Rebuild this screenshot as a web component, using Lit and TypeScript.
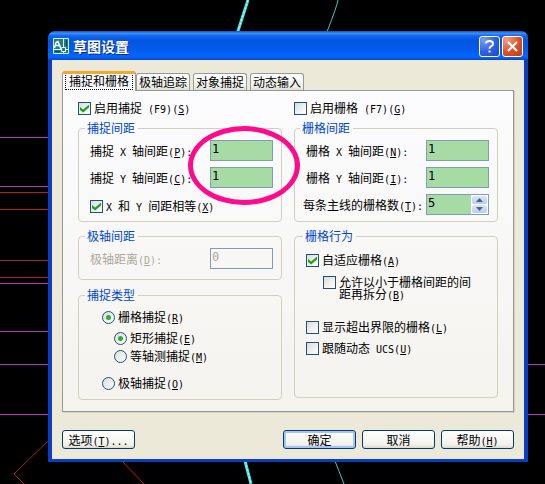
import { LitElement, html, css, svg } from "lit";
import { customElement } from "lit/decorators.js";

const en = (text: string) => html`<span class="en">${text}</span>`;
const key = (k: string, tail = "") => html`<span class="en">(<u>${k}</u>)${tail}</span>`;

const hLines: [number, string][] = [
  [137, "#c030c4"],
  [186, "#c030c4"],
  [192, "#b82020"],
  [209, "#b82020"],
  [260, "#b82020"],
  [277, "#b82020"],
  [283, "#c030c4"],
  [331, "#c030c4"],
  [364, "#c030c4"],
  [414, "#c030c4"],
];

@customElement("app-root")
export class AppRoot extends LitElement {
  static styles = css`
    :host {
      display: block;
      position: relative;
      box-sizing: border-box;
      min-height: 100vh;
      padding: 31px 17px 22px 48px;
      background: #000;
      overflow: hidden;
      color: #000;
      font: 12px/14px "Noto Sans CJK SC", sans-serif;
    }
    * {
      box-sizing: border-box;
    }
    .drawing {
      position: absolute;
      left: 0;
      top: 0;
    }
    .en {
      font: 10px/1px "DejaVu Sans Mono", monospace;
      white-space: pre;
    }
    .dialog {
      position: relative;
      border-radius: 7px 7px 0 0;
      background: #0a3fc4;
      overflow: hidden;
    }
    .title {
      display: flex;
      align-items: center;
      height: 29px;
      padding: 0 5px;
      color: #fff;
      background: linear-gradient(#0b50c8, #3a93ff 8%, #1468ee 16%, #0456e2 30%, #0459ea 60%, #0266ff 85%, #0260f4 93%, #0340c0);
    }
    .title h1 {
      flex: 1;
      margin: 0 0 0 4px;
      font-size: 14px;
      line-height: 20px;
      font-weight: 700;
      text-shadow: 1px 1px #0a2a7c;
    }
    .cap {
      width: 21px;
      height: 21px;
      margin: 2px 0 0 2px;
      padding: 0;
      border: 1px solid #fff;
      border-radius: 3px;
      background: radial-gradient(circle at 20% 15%, #7c9cf2, #2c5fe0 55%, #1c48c4);
    }
    .cap.close {
      background: radial-gradient(circle at 20% 15%, #f0a088, #dc5028 55%, #c03c14);
    }
    .cap svg {
      display: block;
    }
    .body {
      margin: 0 4px 3px;
      padding: 11px 10px 10px;
      background: #ece9d8;
    }
    .tabs {
      display: flex;
      align-items: flex-end;
      gap: 3px;
      height: 19px;
    }
    .tab {
      height: 17px;
      padding: 0 2px;
      border: 1px solid #919b9c;
      border-bottom: 0;
      border-radius: 3px 3px 0 0;
      background: linear-gradient(#fff, #f0f0ea 80%, #dcdcd4);
      font: inherit;
      line-height: 16px;
      color: #000;
      white-space: nowrap;
    }
    .tab.active {
      position: relative;
      z-index: 1;
      height: 20px;
      margin: 0 -3px -1px 0;
      border-top: 3px solid #f0a830;
      background: #fcfcfe;
      line-height: 12px;
    }
    .tab.active span {
      display: block;
      height: 15px;
      padding: 0 3px;
      border: 1px dotted #000;
      border-top: 0;
    }
    .panel {
      display: grid;
      grid-template-columns: 1fr 1fr;
      gap: 12px;
      padding: 11px 15px 11px;
      border: 1px solid #919b9c;
      background: linear-gradient(#fcfcfe, #f4f3ee);
      box-shadow: 1px 1px #d4d0c0;
    }
    .col {
      display: flex;
      flex-direction: column;
      min-width: 0;
    }
    .check {
      display: flex;
      align-items: flex-start;
      gap: 3px;
      min-height: 13px;
      line-height: 12px;
      white-space: nowrap;
    }
    .top {
      margin-bottom: 6px;
    }
    input {
      margin: 0;
      font: inherit;
    }
    .check input {
      appearance: none;
      flex: none;
      display: grid;
      place-items: center;
      width: 13px;
      height: 13px;
      border: 1px solid #1c5180;
      background: linear-gradient(135deg, #dcdcd7, #fff);
    }
    .check input[type="checkbox"]:checked::before {
      content: "";
      width: 9px;
      height: 8px;
      background: #21a121;
      clip-path: polygon(0 30%, 35% 62%, 100% 0, 100% 38%, 35% 100%, 0 68%);
    }
    .check input[type="radio"] {
      border-radius: 50%;
    }
    .check input[type="radio"]:checked::before {
      content: "";
      width: 5px;
      height: 5px;
      border-radius: 50%;
      background: #2fae2f;
    }
    fieldset {
      position: relative;
      min-width: 0;
      margin: 0;
      border: 1px solid #d0d0bf;
      border-radius: 4px;
      padding: 5px 8px 6px;
    }
    legend {
      height: 14px;
      margin: 0;
      padding: 0 3px 0 2px;
      line-height: 14px;
      color: #0046d5;
    }
    .left legend {
      margin-left: -5px;
    }
    .left fieldset {
      padding-left: 11px;
    }
    .right legend {
      margin-left: -3px;
    }
    .row {
      display: flex;
      align-items: center;
      justify-content: space-between;
      height: 21px;
      white-space: nowrap;
    }
    .row + .row {
      margin-top: 6px;
    }
    .indent {
      padding-left: 3px;
    }
    .field {
      width: 63px;
      height: 21px;
      padding: 0 1px 3px;
      border: 1px solid #7f9db9;
      border-radius: 0;
      background: #a6dca4;
      color: #000;
      font: 12px/16px "DejaVu Sans Mono", monospace;
    }
    .off {
      color: #aca899;
    }
    .field:disabled {
      background: transparent;
      color: #aca899;
    }
    .spin {
      display: flex;
      width: 63px;
      height: 21px;
      border: 1px solid #7f9db9;
      background: #fff;
    }
    .spin .field {
      flex: 1;
      width: 0;
      height: 19px;
      border: 0;
    }
    .arrows {
      display: grid;
      gap: 1px;
      padding: 1px;
    }
    .arrows button {
      display: grid;
      place-items: center;
      width: 15px;
      height: 8px;
      padding: 0;
      border: 0;
      border-radius: 2px;
      background: linear-gradient(#dce6fc, #b8ccf4);
    }
    .equal {
      margin: 12px 0 2px;
    }
    .polar {
      margin: 7px 0 8px;
      padding-bottom: 10px;
    }
    .type {
      padding: 9px 0 9px;
    }
    .type .check {
      margin-left: 12px;
    }
    .type .sub {
      margin-left: 24px;
    }
    .gap-s {
      margin-top: 5px;
    }
    .gap-m {
      margin-top: 8px;
    }
    .gap-l {
      margin-top: 14px;
    }
    .behavior {
      flex: 1;
      margin: 7px 0 2px;
      padding: 11px 8px 10px 11px;
    }
    .behavior .sub {
      margin: 9px 0 21px 17px;
    }
    .footer {
      display: flex;
      gap: 6px;
      margin-top: 18px;
    }
    .btn {
      width: 73px;
      height: 19px;
      padding: 0;
      border: 1px solid #003c74;
      border-radius: 3px;
      background: linear-gradient(#fff, #f2f1ec 80%, #dcd8cc);
      color: #000;
      font: inherit;
      line-height: 16px;
      white-space: nowrap;
    }
    .btn.first {
      margin-right: auto;
    }
    .btn.default {
      box-shadow: inset 0 0 0 2px #a8c4f4;
    }
    .mark {
      position: absolute;
      left: 109px;
      top: -9px;
      width: 112px;
      height: 79px;
      border: 5px solid #ff0a8c;
      border-radius: 50%;
      pointer-events: none;
      z-index: 2;
    }
  `;

  private check(cls: string, on: boolean, label: unknown) {
    return html`<label class="check ${cls}"><input type="checkbox" .checked=${on} /><span>${label}</span></label>`;
  }

  private radio(cls: string, name: string, on: boolean, label: unknown) {
    return html`<label class="check ${cls}"><input type="radio" name=${name} .checked=${on} /><span>${label}</span></label>`;
  }

  private row(cls: string, label: unknown, value: string, disabled = false) {
    return html`<label class="row ${cls}"><span>${label}</span><input class="field" type="text" .value=${value} ?disabled=${disabled} /></label>`;
  }

  render() {
    return html`
      <svg class="drawing" width="545" height="484" viewBox="0 0 545 484" fill="none" aria-hidden="true">
        ${hLines.map(([y, c]) => svg`<path d="M0 ${y + 0.5}H50" stroke=${c} />`)}
        <path d="M520 364.5H545M520 414.5H545" stroke="#c030c4" />
        <path d="M50 439L14 474L24 484M122 461L144 484" stroke="#c01c10" />
        <path d="M248 0L237 34M245 461L251 484" stroke="#4fe0e0" stroke-width="3" />
        <path d="M248 0L237 34M245 461L251 484" stroke="#c8ffff" stroke-dasharray="2 2" />
        <path d="M338 0Q337 6 327 32M335 461L344 484" stroke="#40c8c8" />
      </svg>
      <div class="dialog" role="dialog" aria-labelledby="title">
        <div class="title">
          <svg width="16" height="16" viewBox="0 0 16 16" fill="none" aria-hidden="true">
            <path d="M0 0H16V16H0Z" fill="#1f7f80" />
            <path d="M.5 .5H15.5V15.5H.5Z" stroke="#d8ecec" />
            <path d="M1.5 10L3 4.5L5 3.5L8 11M3 7.5H6" stroke="#fff" stroke-width="1.5" />
            <path d="M10.5 1V9M10.5 13V15M1 11.5H8M13 11.5H15M8.5 9.5H12.5V13.5H8.5Z" stroke="#e8ffff" />
            <path d="M13.5 2V8M2 13.5H7" stroke="#0a4850" />
          </svg>
          <h1 id="title">草图设置</h1>
          <button class="cap" aria-label="帮助">
            <svg width="19" height="19" viewBox="0 0 19 19" fill="none">
              <path d="M6 6.5Q6 4 9.5 4T13 6.7Q13 8.3 11 9.3Q9.5 10 9.5 11.7" stroke="#fff" stroke-width="2" />
              <path d="M8.5 13.5H10.5V15.5H8.5Z" fill="#fff" />
            </svg>
          </button>
          <button class="cap close" aria-label="关闭">
            <svg width="19" height="19" viewBox="0 0 19 19" fill="none">
              <path d="M5 5L14 14M14 5L5 14" stroke="#fff" stroke-width="2" />
            </svg>
          </button>
        </div>
        <div class="body">
          <div class="tabs" role="tablist">
            <button class="tab active" role="tab" aria-selected="true"><span>捕捉和栅格</span></button>
            <button class="tab" role="tab">极轴追踪</button>
            <button class="tab" role="tab">对象捕捉</button>
            <button class="tab" role="tab">动态输入</button>
          </div>
          <div class="panel" role="tabpanel">
            <div class="col left">
              ${this.check("top", true, html`启用捕捉${en(" (F9)")}${key("S")}`)}
              <fieldset>
                <legend>捕捉间距</legend>
                ${this.row("", html`捕捉${en(" X ")}轴间距${key("P", ":")}`, "1")}
                ${this.row("", html`捕捉${en(" Y ")}轴间距${key("C", ":")}`, "1")}
                ${this.check("equal", true, html`${en("X ")}和${en(" Y ")}间距相等${key("X")}`)}
                <div class="mark"></div>
              </fieldset>
              <fieldset class="polar">
                <legend>极轴间距</legend>
                ${this.row("off", html`极轴距离${key("D", ":")}`, "0", true)}
              </fieldset>
              <fieldset class="type">
                <legend>捕捉类型</legend>
                ${this.radio("", "snap", true, html`栅格捕捉${key("R")}`)}
                ${this.radio("sub gap-m", "grid", true, html`矩形捕捉${key("E")}`)}
                ${this.radio("sub gap-s", "grid", false, html`等轴测捕捉${key("M")}`)}
                ${this.radio("gap-l", "snap", false, html`极轴捕捉${key("O")}`)}
              </fieldset>
            </div>
            <div class="col right">
              ${this.check("top", false, html`启用栅格${en(" (F7)")}${key("G")}`)}
              <fieldset>
                <legend>栅格间距</legend>
                ${this.row("indent", html`栅格${en(" X ")}轴间距${key("N", ":")}`, "1")}
                ${this.row("indent", html`栅格${en(" Y ")}轴间距${key("I", ":")}`, "1")}
                <div class="row">
                  <label for="major">每条主线的栅格数${key("T", ":")}</label>
                  <div class="spin">
                    <input id="major" class="field" type="text" .value=${"5"} />
                    <div class="arrows">
                      <button aria-label="增加">
                        <svg width="7" height="4" viewBox="0 0 7 4"><path d="M0 4L3.5 0L7 4Z" fill="#4d6185" /></svg>
                      </button>
                      <button aria-label="减少">
                        <svg width="7" height="4" viewBox="0 0 7 4"><path d="M0 0L3.5 4L7 0Z" fill="#4d6185" /></svg>
                      </button>
                    </div>
                  </div>
                </div>
              </fieldset>
              <fieldset class="behavior">
                <legend>栅格行为</legend>
                ${this.check("", true, html`自适应栅格${key("A")}`)}
                ${this.check("sub", false, html`允许以小于栅格间距的间<br />距再拆分${key("B")}`)}
                ${this.check("", false, html`显示超出界限的栅格${key("L")}`)}
                ${this.check("gap-m", false, html`跟随动态${en(" UCS")}${key("U")}`)}
              </fieldset>
            </div>
          </div>
          <div class="footer">
            <button class="btn first">选项${key("T", "...")}</button>
            <button class="btn default">确定</button>
            <button class="btn">取消</button>
            <button class="btn">帮助${key("H")}</button>
          </div>
        </div>
      </div>
    `;
  }
}
